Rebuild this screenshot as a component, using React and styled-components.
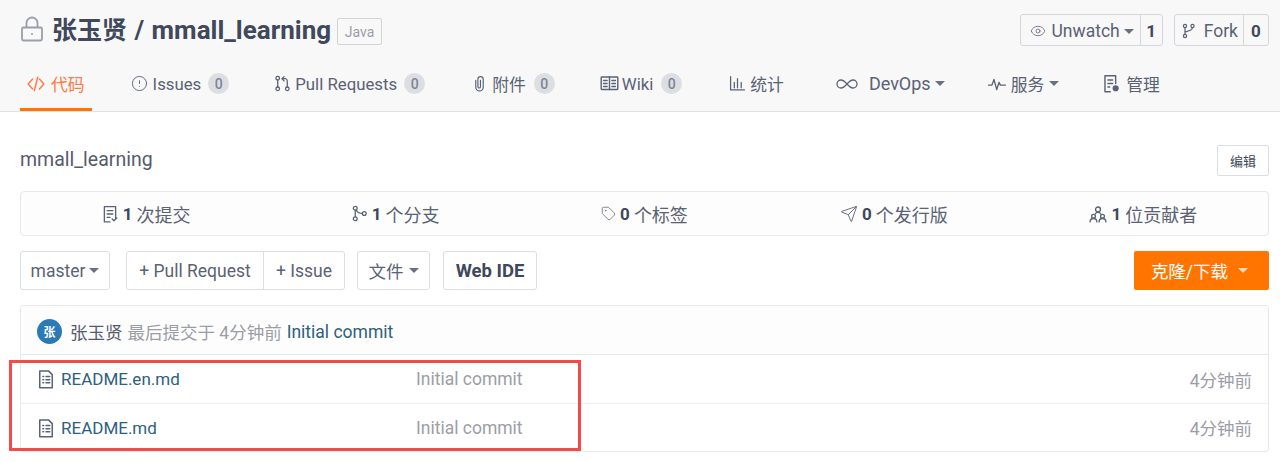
import React from "react";
import styled, { createGlobalStyle } from "styled-components";
import { Eye, Tag, Send, CircleAlert, Infinity as InfinityIcon } from "lucide-react";

const Global = createGlobalStyle`
  html, body { margin: 0; padding: 0; background: #fff; }
  body {
    width: 1280px;
    height: 462px;
    overflow: hidden;
    font-family: Roboto, "Noto Sans CJK SC", sans-serif;
    color: #40485b;
    font-size: 16px;
  }
  * { box-sizing: border-box; }
`;

const Page = styled.div`
  position: relative;
  width: 1280px;
  height: 462px;
`;

const Header = styled.header`
  height: 112px;
  background: #f8f8f8;
  border-bottom: 1px solid #dfe0e2;
  padding: 0 11px 0 20px;
`;

const TitleRow = styled.div`
  display: flex;
  align-items: flex-start;
  justify-content: space-between;
  height: 60px;
  padding-top: 14px;
`;

const RepoTitle = styled.div`
  display: flex;
  align-items: center;
  height: 32px;
  color: #8c92a4;
`;

const RepoName = styled.h1`
  margin: 0 6px 0 8px;
  font-size: 25px;
  font-weight: 700;
  line-height: 32px;
  color: #40485b;
`;

const RepoSlug = styled.span`
  font-size: 26px;
  word-spacing: 1px;
`;

const LangBadge = styled.span`
  display: inline-flex;
  align-items: center;
  justify-content: center;
  width: 45px;
  height: 27px;
  margin-top: 3px;
  border: 1px solid #d4d4d5;
  border-radius: 2px;
  font-size: 14px;
  color: #9a9ea8;
`;

const Actions = styled.div`
  display: flex;
  gap: 11px;
`;

const ActionGroup = styled.div`
  display: flex;
  height: 32px;
  border: 1px solid #d4d6db;
  border-radius: 3px;
  background: #f8f8f8;
`;

const ActionLabel = styled.span`
  display: flex;
  align-items: center;
  gap: ${(p) => p.$gap || 6}px;
  padding: 1px ${(p) => p.$right || 6}px 0 ${(p) => p.$left || 9}px;
  font-size: 17.5px;
  color: #5a6275;
`;

const ActionCount = styled.span`
  display: flex;
  align-items: center;
  justify-content: center;
  width: ${(p) => p.$w || 24}px;
  padding-top: 1px;
  border-left: 1px solid #d4d6db;
  font-size: 17px;
  font-weight: 700;
  color: #40485b;
`;

const Caret = styled.i`
  display: inline-block;
  flex: none;
  vertical-align: middle;
  width: 0;
  height: 0;
  margin-left: ${(p) => p.$ml ?? 4}px;
  border-left: ${(p) => p.$s || 5}px solid transparent;
  border-right: ${(p) => p.$s || 5}px solid transparent;
  border-top: ${(p) => p.$s || 5}px solid ${(p) => p.$c || "#6a7080"};
`;

const Tabs = styled.nav`
  display: flex;
  height: 51px;
`;

const Tab = styled.a`
  display: flex;
  align-items: center;
  gap: ${(p) => p.$gap ?? 5}px;
  height: 51px;
  margin-left: ${(p) => p.$ml || 0}px;
  padding: 0 7px 1px;
  font-size: ${(p) => p.$fs || 16.8}px;
  color: ${(p) => (p.$active ? "#ff7a45" : "#5a6275")};
  border-bottom: 3px solid ${(p) => (p.$active ? "#ff7500" : "transparent")};
`;

const Count = styled.span`
  display: inline-flex;
  align-items: center;
  justify-content: center;
  width: 21px;
  height: 21px;
  margin-left: ${(p) => p.$ml ?? 2}px;
  border-radius: 50%;
  background: #dcdee2;
  color: #7d8597;
  font-size: 14px;
  font-weight: 500;
`;

const Body = styled.main`
  padding: 0 11px 0 20px;
`;

const DescRow = styled.div`
  display: flex;
  align-items: center;
  justify-content: space-between;
  height: 64px;
  padding-top: 32px;
  font-size: 19.5px;
  color: #555b6b;
`;

const DescText = styled.span`
  margin-bottom: 2px;
`;

const EditButton = styled.span`
  display: flex;
  align-items: center;
  justify-content: center;
  width: 52px;
  height: 31px;
  border: 1px solid #dcdee2;
  border-radius: 2px;
  font-size: 13px;
  color: #40485b;
`;

const Stats = styled.div`
  display: grid;
  grid-template-columns: repeat(5, 1fr);
  height: 45px;
  margin-top: 15px;
  background: #fdfdfd;
  border: 1px solid #e7e8ea;
  border-radius: 4px;
`;

const Stat = styled.div`
  display: flex;
  align-items: center;
  justify-content: center;
  gap: 4px;
  font-size: 18px;
  color: #5a6275;
  b { font-weight: 700; color: #40485b; font-size: 17px; }
`;

const Toolbar = styled.div`
  display: flex;
  align-items: center;
  margin-top: 15px;
  height: 39px;
`;

const ToolButton = styled.span`
  display: flex;
  align-items: center;
  justify-content: center;
  height: 39px;
  width: ${(p) => p.$w}px;
  margin-right: ${(p) => p.$mr || 0}px;
  background: #fff;
  border: 1px solid #dcdee2;
  border-radius: 3px;
  font-size: ${(p) => (p.$bold ? 18.5 : 17.5)}px;
  font-weight: ${(p) => (p.$bold ? 700 : 400)};
  color: ${(p) => (p.$bold ? "#40485b" : "#5a6275")};
`;

const ButtonPair = styled.div`
  display: flex;
  height: 39px;
  margin-right: 12px;
  background: #fff;
  border: 1px solid #dcdee2;
  border-radius: 3px;
`;

const PairItem = styled.span`
  display: flex;
  align-items: center;
  justify-content: center;
  width: ${(p) => p.$w}px;
  border-left: ${(p) => (p.$divider ? "1px solid #dcdee2" : "none")};
  font-size: 17.5px;
  color: #5a6275;
`;

const CloneButton = styled.span`
  display: flex;
  align-items: center;
  justify-content: center;
  gap: 10px;
  width: 135px;
  height: 39px;
  margin-left: auto;
  padding-right: 4px;
  background: #ff7500;
  border-radius: 2px;
  font-size: 17.5px;
  color: #fff;
`;

const FileBox = styled.section`
  margin-top: 15px;
  border: 1px solid #e7e8ea;
  border-radius: 3px;
`;

const CommitBar = styled.div`
  display: flex;
  align-items: center;
  height: 49px;
  padding-left: 16px;
  padding-top: 3px;
  background: #fdfdfd;
  border-bottom: 1px solid #e7e8ea;
  font-size: 17.5px;
  color: #9b9ea6;
`;

const Avatar = styled.span`
  display: flex;
  align-items: center;
  justify-content: center;
  width: 25px;
  height: 25px;
  margin-right: 8px;
  border-radius: 50%;
  background: #2a7ab5;
  color: #fff;
  font-size: 12px;
  font-weight: 700;
`;

const Author = styled.span`
  color: #555b6b;
  margin-right: 5px;
`;

const CommitLink = styled.span`
  color: #2d5f7e;
  margin-left: 5px;
`;

const FileRow = styled.div`
  display: grid;
  grid-template-columns: 380px 1fr auto;
  align-items: center;
  height: 48px;
  padding: 0 16px 0 15px;
  font-size: 17.5px;
  border-top: ${(p) => (p.$first ? "none" : "1px solid #eeeff1")};
`;

const FileName = styled.span`
  display: flex;
  align-items: center;
  gap: 5px;
  font-size: 17px;
  color: #2d5f7e;
`;

const FileCommit = styled.span`
  color: #9b9ea6;
`;

const FileTime = styled.span`
  color: #9b9ea6;
`;

const Highlight = styled.div`
  position: absolute;
  left: 9px;
  top: 360px;
  width: 572px;
  height: 91px;
  border: 3px solid #f54a4a;
  pointer-events: none;
`;

const Svg = ({ size = 16, children, w = 1.2, color = "currentColor" }) => (
  <svg width={size} height={size} viewBox="0 0 16 16" fill="none" stroke={color} strokeWidth={w} strokeLinecap="round" strokeLinejoin="round">
    {children}
  </svg>
);

const LockIcon = () => (
  <svg width="24" height="28" viewBox="0 0 24 28" fill="none" stroke="#9a9ea8" strokeWidth="1.8">
    <rect x="2" y="11.500" width="20" height="13" rx="1.500" />
    <path d="M6.500 11.500V7a5.500 5.500 0 0 1 11 0v4.500" />
    <circle cx="12" cy="18" r="1" fill="#9a9ea8" stroke="none" />
  </svg>
);
const CodeIcon = () => (
  <Svg size={18} w={1.3}><path d="M5 3.500 1 8l4 4.500M11 3.500 15 8l-4 4.500M9.500 2 6.500 14" /></Svg>
);
const PrIcon = () => (
  <Svg size={17}><circle cx="3.500" cy="3" r="1.700" /><circle cx="3.500" cy="13" r="1.700" /><circle cx="12.500" cy="13" r="1.700" /><path d="M3.500 4.700v6.600M12.500 11.300V5.500A2 2 0 0 0 10.500 3.500H8M9.500 1.500 7.500 3.500l2 2" /></Svg>
);
const ClipIcon = () => (
  <Svg size={17} w={1.1}><path d="M4.500 5v6.500a3.500 3.500 0 0 0 7 0V4a2.500 2.500 0 0 0-5 0v7a1.200 1.200 0 0 0 2.400 0V5" /></Svg>
);
const BookIcon = () => (
  <Svg size={19}><rect x="1" y="2.500" width="14" height="10.500" rx=".6" /><path d="M8 2.500V13M3 5.500h3M3 8h3M3 10.500h3M10 5.500h3M10 8h3M10 10.500h3" /></Svg>
);
const ChartIcon = () => (
  <Svg size={17}><path d="M1.500 1.500v12.500h13M5 12V7M8 12V3.500M11.500 12V7" /></Svg>
);
const PulseIcon = () => (
  <Svg size={18}><path d="M.5 9h3l1.800-5 2.500 9 2-6.500 1.200 2.500h4.500" /></Svg>
);
const ManageIcon = () => (
  <Svg size={19}><path d="M7 15H2.500V1.500h9V8M5 5h4M5 8h4M5 11h1.500" /><circle cx="11.500" cy="12" r="2" fill="currentColor" /></Svg>
);
const CommitIcon = () => (
  <Svg size={18}><path d="M8 15H3V1.500h10V12M5.500 5h5M5.500 8h5M5.500 11h2.500M10 12.500l1.500 1.500 2.500-2.500" /></Svg>
);
const BranchIcon = () => (
  <Svg size={17}><circle cx="4" cy="3" r="1.800" /><circle cx="4" cy="13" r="1.800" /><circle cx="12.500" cy="8" r="1.800" /><path d="M4 4.800v6.400M5 5c1 2 3 3 5.700 3" /></Svg>
);
const ForkIcon = () => (
  <Svg size={16}><circle cx="4" cy="3" r="1.600" /><circle cx="4" cy="13" r="1.600" /><circle cx="11.500" cy="3" r="1.600" /><path d="M4 4.600v6.800M11.500 4.600c0 2.500-3 3.500-7.500 4.500" /></Svg>
);
const PeopleIcon = () => (
  <Svg size={18}><circle cx="8" cy="4" r="2.200" /><circle cx="4" cy="10" r="1.700" /><circle cx="12" cy="10" r="1.700" /><path d="M1 15c0-2 1.200-3 3-3s3 1 3 3M9 15c0-2 1.200-3 3-3s3 1 3 3M5.500 8c.5-1 1.500-1.500 2.500-1.500S10 7 10.500 8" /></Svg>
);
const FileIcon = () => (
  <Svg size={20} color="#5a6275"><path d="M3 1.500h7l3 3V15H3zM5.500 6h.6M8 6h3M5.500 8.500h.6M8 8.500h3M5.500 11h.6M8 11h3" /></Svg>
);

export default function App() {
  return (
    <Page>
      <Global />
      <Header>
        <TitleRow>
          <RepoTitle>
            <LockIcon />
            <RepoName>张玉贤<RepoSlug> / mmall_learning</RepoSlug></RepoName>
            <LangBadge>Java</LangBadge>
          </RepoTitle>
          <Actions>
            <ActionGroup>
              <ActionLabel>
                <Eye size={16} strokeWidth={1.2} />
                <span>Unwatch<Caret /></span>
              </ActionLabel>
              <ActionCount $w={22}>1</ActionCount>
            </ActionGroup>
            <ActionGroup>
              <ActionLabel $gap={7} $left={6} $right={5}>
                <ForkIcon />
                Fork
              </ActionLabel>
              <ActionCount $w={25}>0</ActionCount>
            </ActionGroup>
          </Actions>
        </TitleRow>
        <Tabs>
          <Tab $active $gap={6}><CodeIcon />代码</Tab>
          <Tab $ml={32} $gap={5}><CircleAlert size={17} strokeWidth={1.3} />Issues<Count>0</Count></Tab>
          <Tab $ml={31} $gap={4}><PrIcon />Pull Requests<Count $ml={3}>0</Count></Tab>
          <Tab $ml={32} $gap={4}><ClipIcon />附件<Count $ml={4}>0</Count></Tab>
          <Tab $ml={31} $gap={3}><BookIcon />Wiki<Count $ml={5}>0</Count></Tab>
          <Tab $ml={33} $gap={4}><ChartIcon />统计</Tab>
          <Tab $ml={37} $gap={10} $fs={18}><InfinityIcon size={24} strokeWidth={1.3} />DevOps<Caret $ml={-6} /></Tab>
          <Tab $ml={29} $gap={5}><PulseIcon />服务<Caret $ml={0} /></Tab>
          <Tab $ml={29} $gap={5}><ManageIcon />管理</Tab>
        </Tabs>
      </Header>
      <Body>
        <DescRow>
          <DescText>mmall_learning</DescText>
          <EditButton>编辑</EditButton>
        </DescRow>
        <Stats>
          <Stat><CommitIcon /><b>1</b> 次提交</Stat>
          <Stat><BranchIcon /><b>1</b> 个分支</Stat>
          <Stat><Tag size={15} strokeWidth={1.2} /><b>0</b> 个标签</Stat>
          <Stat><Send size={18} strokeWidth={1.2} /><b>0</b> 个发行版</Stat>
          <Stat><PeopleIcon /><b>1</b> 位贡献者</Stat>
        </Stats>
        <Toolbar>
          <ToolButton $w={90} $mr={16}>master<Caret /></ToolButton>
          <ButtonPair>
            <PairItem $w={136}>+ Pull Request</PairItem>
            <PairItem $w={81} $divider>+ Issue</PairItem>
          </ButtonPair>
          <ToolButton $w={73} $mr={13}>文件<Caret $ml={5} /></ToolButton>
          <ToolButton $w={94} $bold>Web IDE</ToolButton>
          <CloneButton>克隆/下载<Caret $s={5.500} $c="#ffd9b8" $ml={0} /></CloneButton>
        </Toolbar>
        <FileBox>
          <CommitBar>
            <Avatar>张</Avatar>
            <Author>张玉贤</Author>
            最后提交于 4分钟前
            <CommitLink>Initial commit</CommitLink>
          </CommitBar>
          <FileRow $first>
            <FileName><FileIcon />README.en.md</FileName>
            <FileCommit>Initial commit</FileCommit>
            <FileTime>4分钟前</FileTime>
          </FileRow>
          <FileRow>
            <FileName><FileIcon />README.md</FileName>
            <FileCommit>Initial commit</FileCommit>
            <FileTime>4分钟前</FileTime>
          </FileRow>
        </FileBox>
      </Body>
      <Highlight />
    </Page>
  );
}
